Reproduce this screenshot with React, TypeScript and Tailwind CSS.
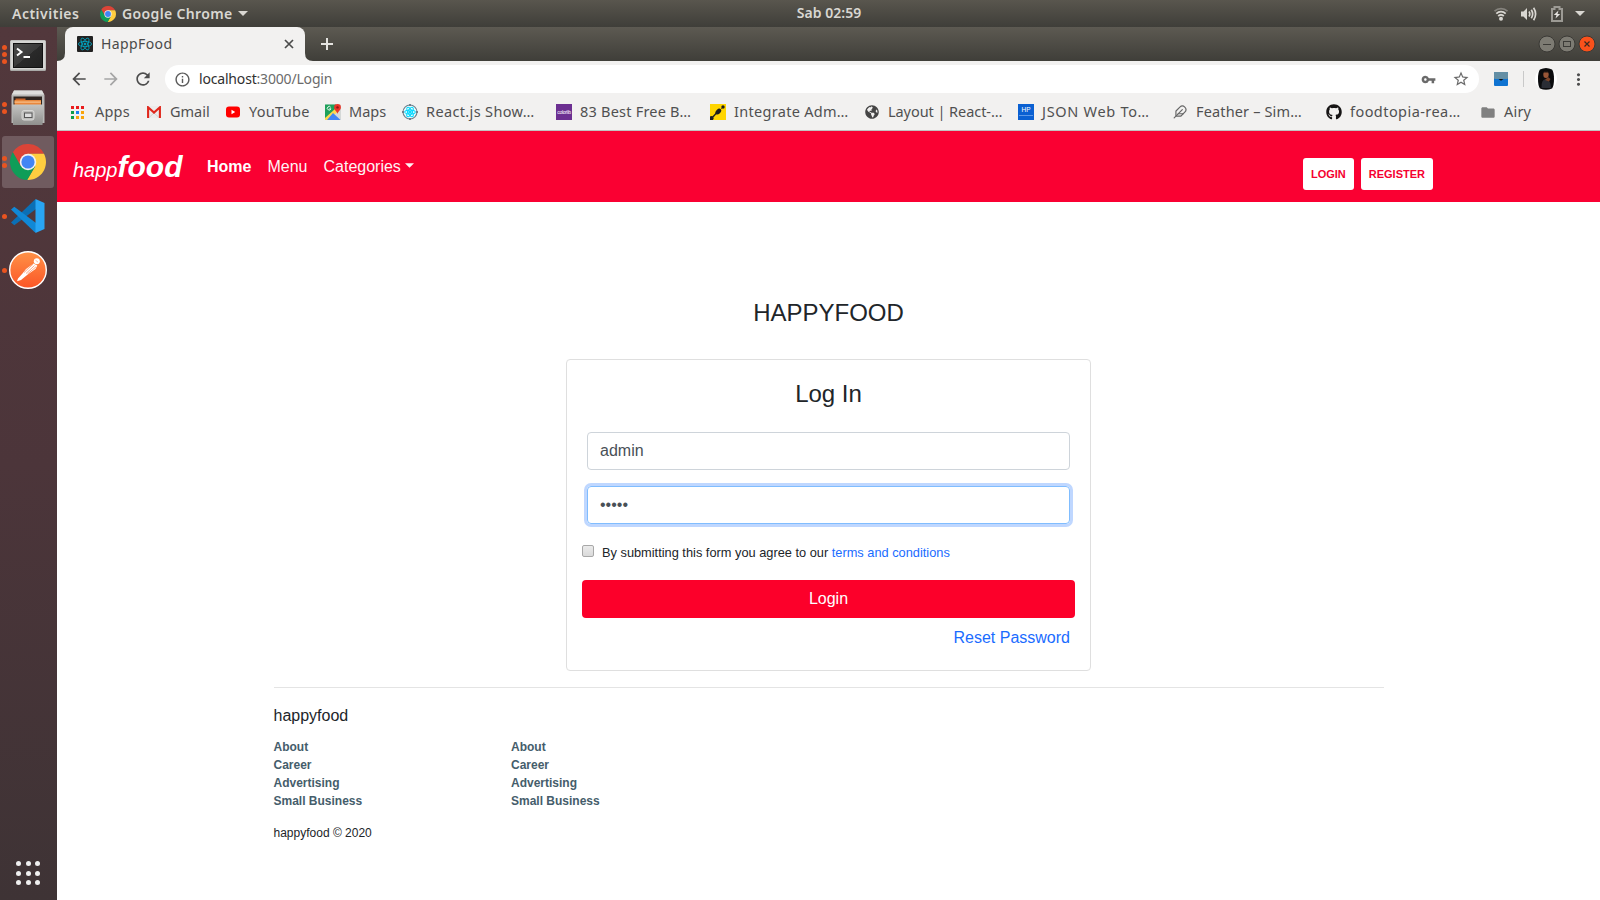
import type { ReactNode } from "react";
import { Feather } from "lucide-react";
import { FaGithub, FaGlobeAmericas } from "react-icons/fa";
import {
  MdArrowBack,
  MdArrowForward,
  MdFolder,
  MdInfoOutline,
  MdMoreVert,
  MdRefresh,
  MdStarBorder,
  MdVpnKey,
} from "react-icons/md";

function ChromeLogo({ size }: { size: number }) {
  return (
    <svg width={size} height={size} viewBox="0 0 48 48">
      <path d="M24 24V13H45.33A24 24 0 0 0 3.8 11.03L14.47 29.5Z" fill="#db4437" />
      <path d="M24 13H45.33A24 24 0 0 1 22.86 47.97L33.53 29.5Z" fill="#ffcd40" />
      <path d="M3.8 11.03L14.47 29.5H33.53L22.86 47.97A24 24 0 0 1 3.8 11.03Z" fill="#0f9d58" />
      <circle cx="24" cy="24" r="11" fill="#f1f1f1" />
      <circle cx="24" cy="24" r="8.8" fill="#4285f4" />
    </svg>
  );
}

function ReactAtom({ stroke, width }: { stroke: string; width: number }) {
  return (
    <g fill="none" stroke={stroke} strokeWidth={width}>
      <ellipse cx="8" cy="8" rx="6.6" ry="2.6" />
      <ellipse cx="8" cy="8" rx="6.6" ry="2.6" transform="rotate(60 8 8)" />
      <ellipse cx="8" cy="8" rx="6.6" ry="2.6" transform="rotate(120 8 8)" />
      <circle cx="8" cy="8" r="1" fill={stroke} />
    </g>
  );
}

function TerminalIcon() {
  return (
    <svg width="36" height="31" viewBox="0 0 36 31" className="mt-0.5">
      <defs>
        <linearGradient id="term" x1="0" y1="0" x2="1" y2="1">
          <stop offset="0" stopColor="#4a4a4a" />
          <stop offset="0.5" stopColor="#3b3b3b" />
          <stop offset="0.51" stopColor="#2a2a2a" />
          <stop offset="1" stopColor="#222" />
        </linearGradient>
      </defs>
      <rect width="36" height="31" rx="1.5" fill="#a9a9a7" />
      <rect x="0.5" y="0.5" width="35" height="29" rx="1" fill="#d5d5d3" />
      <rect x="3" y="3" width="30" height="25" fill="#111" />
      <rect x="4" y="4" width="28" height="23" fill="url(#term)" />
      <path d="M7 8.5L11.5 12L7 15.5" fill="none" stroke="#fff" strokeWidth="2" />
      <path d="M13.5 17H20" stroke="#fff" strokeWidth="2" />
    </svg>
  );
}

function FilesIcon() {
  return (
    <svg width="34" height="36" viewBox="0 0 34 36">
      <defs>
        <linearGradient id="cab" x1="0" y1="0" x2="0" y2="1">
          <stop offset="0" stopColor="#c4c4c2" />
          <stop offset="1" stopColor="#8f8f8d" />
        </linearGradient>
      </defs>
      <path d="M3 0.5H31L33.5 5V33H0.5V5Z" fill="#b9b9b7" />
      <path d="M3 0.5H31L33 4.5H1Z" fill="#dededc" />
      <rect x="2.5" y="6.5" width="28.5" height="9" fill="#2e2520" />
      <rect x="4.5" y="8.5" width="10" height="6" fill="#c9632a" />
      <rect x="3.5" y="10" width="26.5" height="5.5" fill="#e9873c" />
      <rect x="3.5" y="11.5" width="26.5" height="1.2" fill="#f8c18c" />
      <path d="M1 14.5H33L31.5 35H2Z" fill="url(#cab)" />
      <rect x="11" y="20.5" width="12" height="9.5" rx="2" fill="#bdbdbb" stroke="#d8d8d6" />
      <rect x="13.5" y="23" width="7.5" height="4.5" fill="#ddd" stroke="#555" />
    </svg>
  );
}

function CodeIcon() {
  return (
    <svg width="34" height="34" viewBox="0 0 34 34">
      <path d="M0 23.5L3.3 26.3L25 10V0.5L23.5 1Z" fill="#0b6fb5" />
      <path d="M0 10.5L3.3 7.7L25 24V33.5L23.5 33Z" fill="#1088d6" />
      <path d="M24.5 0L33.5 4V30L24.5 34Z" fill="#29a5f3" />
    </svg>
  );
}

function PostmanIcon() {
  return (
    <svg width="38" height="38" viewBox="0 0 38 38">
      <defs>
        <linearGradient id="pm" x1="0" y1="0" x2="0" y2="1">
          <stop offset="0" stopColor="#ff9248" />
          <stop offset="1" stopColor="#fb5526" />
        </linearGradient>
      </defs>
      <circle cx="19" cy="19" r="18.3" fill="url(#pm)" stroke="#fff" strokeWidth="1.4" />
      <circle cx="27.8" cy="10.3" r="3" fill="#fff" />
      <path d="M24.5 12.5L28.3 14.6L26.5 18L20.5 22.3L17.5 24.5L12 29L8 30.3L9 27.5L13.5 22.5L17 18Z" fill="#fff" />
      <path d="M17 22.5L25.5 14.5M18.5 23L27 15.8M15 21.5L24 13.2" stroke="#fb7038" strokeWidth="0.6" />
      <path d="M26.5 9.2L29 11.2" stroke="#fb9060" strokeWidth="0.6" />
    </svg>
  );
}

function DockItem({ dots, active, children }: { dots: number; active?: boolean; children: ReactNode }) {
  return (
    <div className="flex h-[54px] w-full items-center pl-0.5">
      <div
        className={
          active
            ? "flex h-[52px] w-[52px] items-center rounded-[3px] bg-[#705b5f]"
            : "flex h-[52px] w-[52px] items-center rounded-[3px]"
        }
      >
        <div className="flex w-[5px] shrink-0 flex-col gap-0.5">
          {Array.from({ length: dots }, (_, i) => (
            <span key={i} className="h-[5px] w-[5px] rounded-full bg-[#e95420]" />
          ))}
        </div>
        <div className="flex w-[42px] shrink-0 justify-center">{children}</div>
      </div>
    </div>
  );
}

function Dock() {
  return (
    <aside className="flex w-[57px] shrink-0 flex-col bg-linear-to-b from-[#52383c] via-[#4c353a] to-[#3e3335]">
      <DockItem dots={3}><TerminalIcon /></DockItem>
      <DockItem dots={2}><FilesIcon /></DockItem>
      <DockItem dots={2} active><ChromeLogo size={36} /></DockItem>
      <DockItem dots={1}><CodeIcon /></DockItem>
      <DockItem dots={1}><PostmanIcon /></DockItem>
      <div className="mt-auto mb-[15px] ml-4 grid w-6 grid-cols-3 gap-x-[4.5px] gap-y-[4.5px]">
        {Array.from({ length: 9 }, (_, i) => (
          <span key={i} className="h-[5px] w-[5px] rounded-full bg-[#f0f0f0]" />
        ))}
      </div>
    </aside>
  );
}

function TopBar() {
  return (
    <header className="grid h-[27px] shrink-0 grid-cols-[1fr_auto_1fr] items-center bg-linear-to-b from-[#59564e] to-[#3f3e39] font-['Noto_Sans',sans-serif] text-sm font-semibold text-[#d9d7d2]">
      <div className="flex items-center whitespace-nowrap">
        <span className="ml-3 w-[88px] tracking-[0.5px]">Activities</span>
        <ChromeLogo size={16} />
        <span className="ml-[6px] w-[116px] tracking-[0.36px]">Google Chrome</span>
        <svg width="10" height="5" viewBox="0 0 10 5"><path d="M0 0H10L5 5Z" fill="#d9d7d2" /></svg>
      </div>
      <span className="pb-px pl-[58px] tracking-[0.05px]">Sab 02:59</span>
      <div className="flex items-center justify-end pr-[15px]">
        <svg width="14" height="14" viewBox="0 0 14 14" fill="none" strokeWidth="1.8">
          <path d="M0.5 4.2C4 0.8 10 0.8 13.5 4.2" stroke="#85837d" />
          <path d="M2.3 6.6C5 4 9 4 11.7 6.6M4.2 9C5.8 7.5 8.2 7.5 9.8 9" stroke="#d9d7d2" />
          <circle cx="7" cy="11.7" r="2" fill="#d9d7d2" />
        </svg>
        <svg width="16" height="14" viewBox="0 0 16 14" className="ml-[13px]" fill="none" stroke="#d9d7d2" strokeWidth="1.7">
          <path d="M0 4.5H2.5L6 1V13L2.5 9.5H0Z" fill="#d9d7d2" stroke="none" />
          <path d="M8 4.5Q9.6 7 8 9.5M10.3 2.7Q13 7 10.3 11.3M12.6 0.8Q16.6 7 12.6 13.2" />
        </svg>
        <svg width="12" height="16" viewBox="0 0 12 16" className="ml-[14px]">
          <path d="M1 3H3.5V1H8.5V3H11V15H1Z" fill="none" stroke="#9c9a94" strokeWidth="2" />
          <path d="M7.5 4.5L2.8 9H5.5L4.5 12.5L9.2 8H6.5Z" fill="#e6e4e0" />
        </svg>
        <svg width="10" height="5" viewBox="0 0 10 5" className="ml-3"><path d="M0 0H10L5 5Z" fill="#d9d7d2" /></svg>
      </div>
    </header>
  );
}

function TabStrip() {
  return (
    <div className="flex h-[34px] shrink-0 items-stretch bg-linear-to-b from-[#5d5a52] to-[#3f3e39]">
      <svg width="8" height="34" viewBox="0 0 8 34"><path d="M0 34Q8 34 8 26V34Z" fill="#f2f1f0" /></svg>
      <div className="flex w-60 items-center rounded-t-lg bg-[#f2f1f0] pr-[10px] pl-3">
        <svg width="16" height="16" viewBox="0 0 16 16">
          <rect width="16" height="16" rx="1" fill="#222" />
          <ReactAtom stroke="#00a8c6" width={0.8} />
        </svg>
        <span className="ml-2 flex-1 font-['Noto_Sans',sans-serif] text-sm tracking-[0.4px] text-[#4a4a4a]">HappFood</span>
        <svg width="12" height="12" viewBox="0 0 12 12" stroke="#4b4b4b" strokeWidth="1.7"><path d="M2 2L10 10M10 2L2 10" /></svg>
      </div>
      <svg width="8" height="34" viewBox="0 0 8 34"><path d="M8 34Q0 34 0 26V34Z" fill="#f2f1f0" /></svg>
      <svg width="12" height="34" viewBox="0 0 12 34" className="ml-2" stroke="#e4e3e0" strokeWidth="2"><path d="M6 11V23M0 17H12" /></svg>
      <div className="ml-auto flex items-center gap-1 pr-[5px]">
        <svg width="16" height="16" viewBox="0 0 16 16" className="overflow-visible">
          <circle cx="8" cy="8" r="8" fill="#7d7b73" stroke="#3a3935" /><path d="M4 8.5H12" stroke="#3c3b37" />
        </svg>
        <svg width="16" height="16" viewBox="0 0 16 16" className="overflow-visible">
          <circle cx="8" cy="8" r="8" fill="#7d7b73" stroke="#3a3935" /><rect x="4.5" y="5.5" width="7" height="5" fill="none" stroke="#3c3b37" />
        </svg>
        <svg width="16" height="16" viewBox="0 0 16 16" className="overflow-visible">
          <circle cx="8" cy="8" r="8" fill="#f9511b" stroke="#3a3935" /><path d="M5.5 5.5L10.5 10.5M10.5 5.5L5.5 10.5" stroke="#3c2a20" strokeWidth="1.2" />
        </svg>
      </div>
    </div>
  );
}

function AddressBar() {
  return (
    <div className="flex h-9 shrink-0 items-center bg-[#f2f1f0] pl-3 text-[#4d4d4d]">
      <MdArrowBack className="h-5 w-5" />
      <MdArrowForward className="ml-3 h-5 w-5 text-[#a5a5a5]" />
      <MdRefresh className="ml-3 h-5 w-5" />
      <div className="ml-3 flex h-7 w-[1314px] items-center rounded-full bg-white pr-[9px] pl-[9px] text-[#6b6b6b]">
        <MdInfoOutline className="h-[17px] w-[17px] text-[#5a5a5a]" />
        <span className="ml-2 flex-1 pb-px font-['Noto_Sans',sans-serif] text-sm tracking-[-0.18px]">
          <span className="text-[#303030]">localhost</span>:3000/Login
        </span>
        <MdVpnKey className="h-[15px] w-[15px] text-[#6a6a6a]" />
        <MdStarBorder className="ml-[16px] h-[18px] w-[18px] text-[#6a6a6a]" />
      </div>
      <svg width="14" height="14" viewBox="0 0 14 14" className="ml-[15px]">
        <rect width="14" height="14" rx="1" fill="#0f73d1" />
        <rect width="14" height="7" rx="1" fill="#648fa5" />
        <path d="M4.5 7H9.5L7 8.8Z" fill="#111" />
      </svg>
      <span className="ml-[15px] h-4 w-px bg-[#c9c9c9]" />
      <svg width="22" height="22" viewBox="0 0 22 22" className="ml-[11px]">
        <circle cx="11" cy="11" r="11" fill="#fff" />
        <path d="M5 1.5Q11 -1.5 17 1.5Q19 4 19 11Q19 18 17 20.5Q11 23 5 20.5Q3 18 3 11Q3 4 5 1.5Z" fill="#0b0b0d" />
        <ellipse cx="11" cy="6.5" rx="2.7" ry="3.6" fill="#9a5637" />
        <path d="M8 4.5Q11 0.5 14 4.5Z" fill="#1a1210" />
        <path d="M6.5 20Q6 12 10.5 11Q16 12 16 20Z" fill="#2a2d35" />
        <path d="M13 9L15.5 11L14 13.5L10 12Z" fill="#7c4329" />
      </svg>
      <MdMoreVert className="ml-3 h-[19px] w-[19px]" />
    </div>
  );
}

function AppsIcon() {
  const colors = ["#ea1c1c", "#ea1c1c", "#ea1c1c", "#0f9d48", "#1a80f0", "#f9a50c", "#0f9d48", "#f9a50c", "#f9a50c"];
  return (
    <svg width="13" height="13" viewBox="0 0 13 13" className="mr-[3px]">
      {colors.map((c, i) => (
        <rect key={i} x={(i % 3) * 5} y={Math.floor(i / 3) * 5} width="3" height="3" fill={c} />
      ))}
    </svg>
  );
}

function GmailIcon() {
  return (
    <svg width="14" height="12" viewBox="0 0 14 12">
      <rect width="14" height="12" rx="1" fill="#ececec" />
      <path d="M2.5 11L7 7L11.5 11" fill="none" stroke="#d0d0d0" />
      <path d="M1.1 12V1.3L7 6.5L12.9 1.3V12" fill="none" stroke="#e0271c" strokeWidth="2.1" />
    </svg>
  );
}

function YouTubeIcon() {
  return (
    <svg width="14" height="12" viewBox="0 0 14 12">
      <rect width="14" height="11" y="0.5" rx="3" fill="#f00" /><path d="M5.5 3.8V8.2L9.2 6Z" fill="#fff" />
    </svg>
  );
}

function MapsIcon() {
  return (
    <svg width="16" height="16" viewBox="0 0 16 16">
      <rect y="0.5" width="16" height="15.5" rx="1" fill="#d5d8d7" />
      <path d="M0 0.5H11V6L0 16Z" fill="#1fa15b" />
      <path d="M10 5L13 7.5L3 16H0V14Z" fill="#ffd84d" />
      <path d="M8 9L15.5 16H2Z" fill="#4285f4" />
      <path d="M5.7 3.3A1.8 1.8 0 1 0 5.9 4.8H4.3" fill="none" stroke="#fff" strokeWidth="0.9" />
      <path d="M12.5 0A3.4 3.4 0 0 1 15.9 3.5C15.9 6.5 13 7 12.5 10C12 7 9.1 6.5 9.1 3.5A3.4 3.4 0 0 1 12.5 0Z" fill="#ea3529" />
      <circle cx="12.5" cy="3.4" r="1.2" fill="#8f1712" />
    </svg>
  );
}

function ShowcaseIcon() {
  return (
    <svg width="16" height="16" viewBox="0 0 16 16">
      <circle cx="8" cy="8" r="7" fill="#e7fbfe" stroke="#70808c" strokeWidth="1.1" />
      <path d="M8 0V2M8 14V16M0 8H2M14 8H16" stroke="#70808c" strokeWidth="2" />
      <g transform="translate(1.6 1.6) scale(0.8)"><ReactAtom stroke="#00d8ff" width={1.3} /></g>
    </svg>
  );
}

function ColorlibIcon() {
  return (
    <span className="flex h-4 w-4 items-center justify-center overflow-hidden bg-[#6c2f91] font-['Liberation_Sans',sans-serif] text-[5px] leading-none tracking-[-0.3px] text-white">
      colorlib
    </span>
  );
}

function IntegrateIcon() {
  return (
    <svg width="16" height="16" viewBox="0 0 16 16">
      <rect width="16" height="16" fill="#ffd500" />
      <path d="M1 15L6.5 9" stroke="#222" strokeWidth="1.4" />
      <path d="M10.5 5.5L13 3" stroke="#222" strokeWidth="0.6" />
      <ellipse cx="8.3" cy="7.6" rx="3.4" ry="2.2" transform="rotate(-45 8.3 7.6)" fill="#1d1d1d" />
      <circle cx="13" cy="3" r="1.7" fill="#1d1d1d" />
      <circle cx="1.3" cy="14.3" r="2.2" fill="#1d1d1d" />
    </svg>
  );
}

function HpIcon() {
  return (
    <span className="flex h-4 w-4 flex-col items-center bg-[#0a60d2] pt-[3px] font-['Liberation_Sans',sans-serif] text-[6.5px] leading-[6px] tracking-normal text-white">
      HP
      <span className="mt-[2px] h-px w-3.5 bg-[#5c98e8]" />
    </span>
  );
}

function Bookmark({ icon, label, className }: { icon: ReactNode; label: string; className: string }) {
  return (
    <div className={`flex shrink-0 items-center whitespace-nowrap ${className}`}>
      <div className="flex w-4 shrink-0 justify-center">{icon}</div>
      <span className="ml-2">{label}</span>
    </div>
  );
}

function BookmarksBar() {
  return (
    <div className="flex h-[34px] shrink-0 items-center border-b border-[#c2c1c0] bg-[#f2f1f0] pb-[3px] pl-[14px] font-['Noto_Sans',sans-serif] text-[14.5px] text-[#505050]">
      <Bookmark className="w-[75px] tracking-[0.2px]" icon={<AppsIcon />} label="Apps" />
      <Bookmark className="w-[79px]" icon={<GmailIcon />} label="Gmail" />
      <Bookmark className="w-[100px] tracking-[0.3px]" icon={<YouTubeIcon />} label="YouTube" />
      <Bookmark className="w-[77px]" icon={<MapsIcon />} label="Maps" />
      <Bookmark className="w-[154px] tracking-[0.36px]" icon={<ShowcaseIcon />} label="React.js Show…" />
      <Bookmark className="w-[154px] tracking-[0.22px]" icon={<ColorlibIcon />} label="83 Best Free B…" />
      <Bookmark className="w-[154px] tracking-[0.3px]" icon={<IntegrateIcon />} label="Integrate Adm…" />
      <Bookmark className="w-[154px] tracking-[-0.06px]" icon={<FaGlobeAmericas className="h-[14px] w-[14px] text-[#454545]" />} label="Layout | React-…" />
      <Bookmark className="w-[154px] tracking-[0.7px]" icon={<HpIcon />} label="JSON Web To…" />
      <Bookmark className="w-[154px] tracking-[0.15px]" icon={<Feather className="h-[14px] w-[14px] text-[#666]" />} label="Feather – Sim…" />
      <Bookmark className="w-[154px] tracking-[0.44px]" icon={<FaGithub className="h-4 w-4 text-[#171515]" />} label="foodtopia-rea…" />
      <Bookmark className="w-[80px] tracking-[0.2px]" icon={<MdFolder className="h-[17px] w-[17px] text-[#808080]" />} label="Airy" />
    </div>
  );
}

function Navbar() {
  return (
    <nav className="flex h-[71px] shrink-0 items-start bg-[#fa0032] pl-4 text-white">
      <a className="mt-[13px] w-[109px] text-xl leading-[45px] italic">
        happ<b className="text-[30px]">food</b>
      </a>
      <div className="ml-[25px] flex pt-6 leading-6">
        <b>Home</b>
        <span className="ml-4 opacity-95">Menu</span>
        <span className="ml-4 flex opacity-95">
          Categories
          <svg width="9" height="5" viewBox="0 0 10 5" className="mt-2 ml-1"><path d="M0 0H10L5 5Z" fill="#fff" /></svg>
        </span>
      </div>
      <div className="mt-[27px] mr-[167px] ml-auto flex gap-[7px] text-[11px] font-bold text-[#f5002f]">
        <button className="h-8 rounded-[3px] bg-white px-2">LOGIN</button>
        <button className="h-8 rounded-[3px] bg-white px-2">REGISTER</button>
      </div>
    </nav>
  );
}

function LoginCard() {
  return (
    <section className="mx-auto flex h-[312px] w-[525px] flex-col rounded border border-[#dfdfdf] px-[15px] pt-[19px]">
      <h2 className="text-center text-2xl leading-[29px]">Log In</h2>
      <div className="mx-[5px] mt-6 h-[38px] rounded border border-[#ced4da] px-3 leading-9 text-[#495057]">admin</div>
      <div className="mx-[5px] mt-4 h-[38px] rounded border border-[#80bdff] px-3 leading-9 text-[#495057] shadow-[0_0_0_3px_#bfd7ff]">•••••</div>
      <div className="mt-[18px] flex h-5 items-center text-[12.8px]">
        <span className="mb-[3px] h-3 w-3 rounded-[2px] border border-[#a8a8a8] bg-linear-to-b from-[#ebebeb] to-[#dadada]" />
        <span className="mt-0.5 ml-2">
          By submitting this form you agree to our <a className="text-[#1a6cff]">terms and conditions</a>
        </span>
      </div>
      <button className="mt-[18px] h-[38px] shrink-0 rounded bg-[#fc002a] text-white">Login</button>
      <a className="mt-2 mr-[5px] self-end leading-6 text-[#1a6cff]">Reset Password</a>
    </section>
  );
}

function FooterLinks() {
  return (
    <ul className="w-[237.5px] text-xs leading-[18px] font-bold text-[#455d6b]">
      <li>About</li>
      <li>Career</li>
      <li>Advertising</li>
      <li>Small Business</li>
    </ul>
  );
}

function Footer() {
  return (
    <footer className="mx-auto mt-4 w-[1110px] border-t border-[#e4e4e4]">
      <p className="mt-4 leading-6">happyfood</p>
      <div className="mt-[10px] flex">
        <FooterLinks />
        <FooterLinks />
      </div>
      <p className="mt-[14px] text-xs leading-[18px]">happyfood © 2020</p>
    </footer>
  );
}

export default function App() {
  return (
    <div className="flex h-[900px] w-[1600px] flex-col overflow-hidden">
      <TopBar />
      <div className="flex min-h-0 flex-1">
        <Dock />
        <div className="flex min-w-0 flex-1 flex-col">
          <TabStrip />
          <AddressBar />
          <BookmarksBar />
          <div className="flex flex-1 flex-col bg-white font-['Liberation_Sans',Arial,sans-serif] text-base text-[#212529]">
            <Navbar />
            <main className="pt-24">
              <h1 className="mb-[32px] text-center text-2xl leading-[29px]">HAPPYFOOD</h1>
              <LoginCard />
            </main>
            <Footer />
          </div>
        </div>
      </div>
    </div>
  );
}
